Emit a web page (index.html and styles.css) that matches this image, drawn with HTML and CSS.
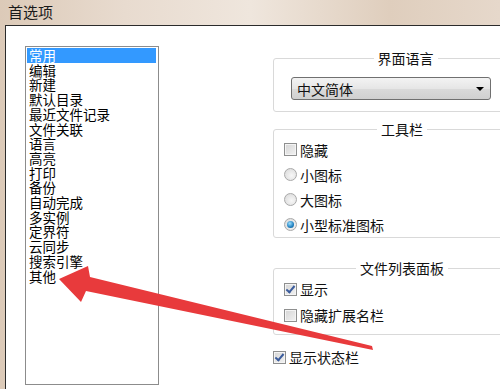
FILE: index.html
```html
<!DOCTYPE html>
<html lang="zh-CN">
  <head>
    <meta charset="UTF-8" />
    <title>首选项</title>
    <link rel="stylesheet" href="styles.css">
  </head>
  <body>
    <div class="window">
      <div class="titlebar">首选项</div>
      <div class="frame">
        <ul class="category-list">
          <li class="selected">常用</li>
          <li>编辑</li>
          <li>新建</li>
          <li>默认目录</li>
          <li>最近文件记录</li>
          <li>文件关联</li>
          <li>语言</li>
          <li>高亮</li>
          <li>打印</li>
          <li>备份</li>
          <li>自动完成</li>
          <li>多实例</li>
          <li>定界符</li>
          <li>云同步</li>
          <li>搜索引擎</li>
          <li>其他</li>
        </ul>

        <div class="settings">
          <fieldset class="group group-lang">
            <legend>界面语言</legend>
            <div class="dropdown">
              <span>中文简体</span>
              <span class="dropdown-arrow"></span>
            </div>
          </fieldset>

          <fieldset class="group group-toolbar">
            <legend>工具栏</legend>
            <div class="option"><span class="checkbox"></span>隐藏</div>
            <div class="option"><span class="radio"></span>小图标</div>
            <div class="option"><span class="radio"></span>大图标</div>
            <div class="option"><span class="radio checked"></span>小型标准图标</div>
          </fieldset>

          <fieldset class="group group-files">
            <legend>文件列表面板</legend>
            <div class="option"><span class="checkbox checked"></span>显示</div>
            <div class="option"><span class="checkbox"></span>隐藏扩展名栏</div>
          </fieldset>

          <div class="option status-option"><span class="checkbox checked"></span>显示状态栏</div>
        </div>
      </div>
    </div>

    <!-- red annotation arrow pointing at 其他 -->
    <svg class="arrow" width="500" height="389" viewBox="0 0 500 389">
      <polygon points="59,279 88,266 90,277 372,346 373,350 86,291 81,302" fill="#e83a3c" />
    </svg>
  </body>
</html>
```

FILE: styles.css
```css
body {
  margin: 0;
  width: 500px;
  height: 389px;
  overflow: hidden;
  position: relative;
  font-family: "Noto Sans CJK SC", "Noto Sans", sans-serif;
  color: #111;
  background: linear-gradient(90deg, #dccab8 0%, #e8dbcf 25%, #efe6dd 50%, #dfcebd 78%, #e6d8cb 100%);
}

.window {
  display: flex;
  flex-direction: column;
  height: 100%;
}

.titlebar {
  height: 25px;
  padding-left: 8px;
  font-size: 15px;
  line-height: 24px;
  color: #1a1a1a;
}

.frame {
  flex: 1;
  display: flex;
  margin-left: 5px;
  border-left: 1px solid #2b2b2b;
  border-top: 1px solid #2b2b2b;
  background: #ffffff;
  overflow: hidden;
}

/* left category list */
.category-list {
  list-style: none;
  flex-shrink: 0;
  margin: 20px 0 0 19px;
  padding: 1px 2px 0 1px;
  width: 129px;
  height: 336px;
  border: 1px solid #8c8c8c;
  font-size: 13.5px;
  line-height: 14.7px;
  color: #000;
}

.category-list li {
  padding-left: 2px;
  white-space: nowrap;
}

.category-list li.selected {
  background: #3399ff;
  color: #fff;
}

/* right settings column */
.settings {
  margin-left: 114px;
  padding-top: 24px;
  width: 250px;
  flex-shrink: 0;
  display: flex;
  flex-direction: column;
}

.group {
  margin: 0;
  padding: 0 0 0 10px;
  width: 248px;
  box-sizing: border-box;
  border: 1px solid #d9d9d9;
  border-radius: 3px;
}

.group legend {
  margin: 0 auto;
  padding: 0 4px;
  font-size: 14px;
  line-height: 16px;
  color: #111;
}

.group-lang {
  padding: 11px 0 11px 17px;
}

.group-toolbar {
  margin-top: 9px;
}

.group-files {
  margin-top: 22px;
  padding-bottom: 6px;
}

.dropdown {
  width: 200px;
  height: 23px;
  box-sizing: border-box;
  display: flex;
  align-items: center;
  justify-content: space-between;
  padding: 0 6px 0 5px;
  border: 1px solid #707070;
  border-radius: 3px;
  background: linear-gradient(#f3f3f3, #e6e6e6 50%, #dadada 51%, #d0d0d0);
  font-size: 14px;
}

.dropdown-arrow {
  width: 0;
  height: 0;
  border-left: 4px solid transparent;
  border-right: 4px solid transparent;
  border-top: 4px solid #000;
}

.option {
  display: flex;
  align-items: center;
  height: 25px;
  font-size: 14px;
  color: #111;
}

.group-files .option {
  height: 26px;
}

.status-option {
  margin-top: 9px;
  height: 26px;
}

.checkbox,
.radio {
  width: 13px;
  height: 13px;
  box-sizing: border-box;
  margin-right: 3px;
  flex-shrink: 0;
  position: relative;
}

.checkbox {
  border: 1px solid #8e8f8f;
  background: linear-gradient(135deg, #d5d5d5, #f2f2f2);
  box-shadow: inset 0 0 0 1px #f4f4f4;
}

.checkbox.checked::after {
  content: '';
  position: absolute;
  left: 3px;
  top: 0;
  width: 3px;
  height: 7px;
  border-right: 2px solid #3b5c9c;
  border-bottom: 2px solid #3b5c9c;
  transform: rotate(40deg);
}

.radio {
  border-radius: 50%;
  border: 1px solid #a9a9a9;
  background: radial-gradient(circle at 60% 60%, #f7f7f7, #d7d7d7);
}

.radio.checked::after {
  content: '';
  position: absolute;
  left: 2px;
  top: 2px;
  width: 7px;
  height: 7px;
  border-radius: 50%;
  background: radial-gradient(circle at 40% 35%, #9fe0ff, #1f7fbf 60%, #0d4f80);
}

.arrow {
  position: absolute;
  left: 0;
  top: 0;
  pointer-events: none;
}
```
